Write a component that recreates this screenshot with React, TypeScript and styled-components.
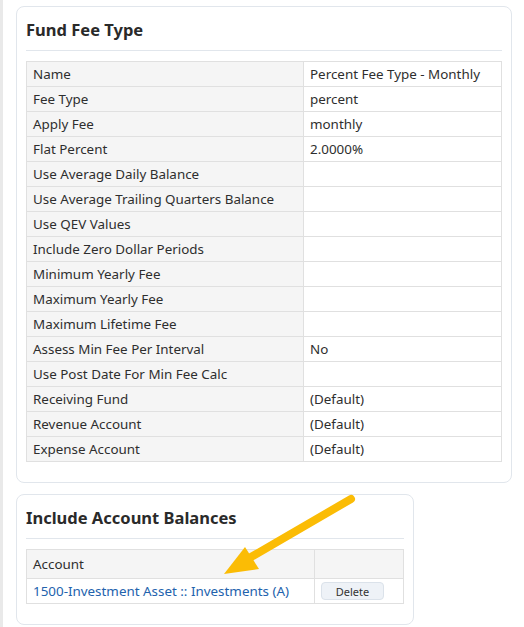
import styled, { createGlobalStyle } from "styled-components";

const GlobalStyle = createGlobalStyle`
    html, body {
        margin: 0;
        padding: 0;
        background: #ffffff;
    }
    body {
        font-family: "Noto Sans", "Open Sans", sans-serif;
        color: #2b2b2b;
    }
`;

const Page = styled.div`
    position: relative;
    min-height: 627px;
    box-sizing: border-box;
    border-left: 3px solid #e9e9e9;
    padding: 6px 0 0 13px;
    display: flex;
    flex-direction: column;
    align-items: flex-start;
    row-gap: 11px;
`;

const Panel = styled.div<{ $width: number }>`
    width: ${(p) => p.$width}px;
    box-sizing: border-box;
    border: 1px solid #e1e6ec;
    border-radius: 8px;
    padding: 0 9px 20px;
`;

const PanelTitle = styled.div`
    font-size: 16.5px;
    font-weight: 700;
    color: #2a2a2a;
    line-height: 24px;
    padding: 11px 0 8px;
    border-bottom: 1px solid #e1e6ec;
    margin-bottom: 10px;
`;

const Table = styled.table`
    width: 100%;
    border-collapse: collapse;
    font-size: 13.4px;
    color: #2e2e2e;
`;

const LabelCell = styled.td<{ $width?: number }>`
    border: 1px solid #e0e0e0;
    background: #f5f5f5;
    height: 25px;
    padding: 0 6px;
    box-sizing: border-box;
    ${(p) => (p.$width ? `width: ${p.$width}px;` : "")}
`;

const ValueCell = styled.td`
    border: 1px solid #e0e0e0;
    background: #ffffff;
    height: 25px;
    padding: 0 6px;
    box-sizing: border-box;
`;

const HeadCell = styled.th<{ $width?: number }>`
    border: 1px solid #e0e0e0;
    background: #f5f5f5;
    height: 29px;
    padding: 0 6px;
    box-sizing: border-box;
    text-align: left;
    font-weight: 400;
    ${(p) => (p.$width ? `width: ${p.$width}px;` : "")}
`;

const Link = styled.a`
    color: #2262ad;
    text-decoration: none;
`;

const DeleteButton = styled.button`
    font-family: inherit;
    font-size: 11px;
    color: #333;
    background: #eef2f7;
    border: 1px solid #dbe2ea;
    border-radius: 4px;
    width: 63px;
    height: 18px;
    padding: 0;
    cursor: pointer;
`;

const Arrow = styled.svg`
    position: absolute;
    left: 0;
    top: 0;
    pointer-events: none;
`;

const feeRows: [string, string][] = [
    ["Name", "Percent Fee Type - Monthly"],
    ["Fee Type", "percent"],
    ["Apply Fee", "monthly"],
    ["Flat Percent", "2.0000%"],
    ["Use Average Daily Balance", ""],
    ["Use Average Trailing Quarters Balance", ""],
    ["Use QEV Values", ""],
    ["Include Zero Dollar Periods", ""],
    ["Minimum Yearly Fee", ""],
    ["Maximum Yearly Fee", ""],
    ["Maximum Lifetime Fee", ""],
    ["Assess Min Fee Per Interval", "No"],
    ["Use Post Date For Min Fee Calc", ""],
    ["Receiving Fund", "(Default)"],
    ["Revenue Account", "(Default)"],
    ["Expense Account", "(Default)"],
];

export default function App() {
    return (
        <>
            <GlobalStyle />
            <Page>
                <Panel $width={496}>
                    <PanelTitle>Fund Fee Type</PanelTitle>
                    <Table>
                        <tbody>
                            {feeRows.map(([label, value]) => (
                                <tr key={label}>
                                    <LabelCell $width={277}>{label}</LabelCell>
                                    <ValueCell>{value}</ValueCell>
                                </tr>
                            ))}
                        </tbody>
                    </Table>
                </Panel>
                <Panel $width={398}>
                    <PanelTitle>Include Account Balances</PanelTitle>
                    <Table>
                        <thead>
                            <tr>
                                <HeadCell $width={288}>Account</HeadCell>
                                <HeadCell />
                            </tr>
                        </thead>
                        <tbody>
                            <tr>
                                <ValueCell>
                                    <Link href="#">1500-Investment Asset :: Investments (A)</Link>
                                </ValueCell>
                                <ValueCell>
                                    <DeleteButton>Delete</DeleteButton>
                                </ValueCell>
                            </tr>
                        </tbody>
                    </Table>
                </Panel>
                <Arrow width="524" height="627" viewBox="0 0 524 627">
                    <line x1="348" y1="499" x2="248" y2="557" stroke="#fbbc05" strokeWidth="8" strokeLinecap="round" />
                    <polygon points="221,574 242,547 256,569" fill="#fbbc05" />
                </Arrow>
            </Page>
        </>
    );
}
